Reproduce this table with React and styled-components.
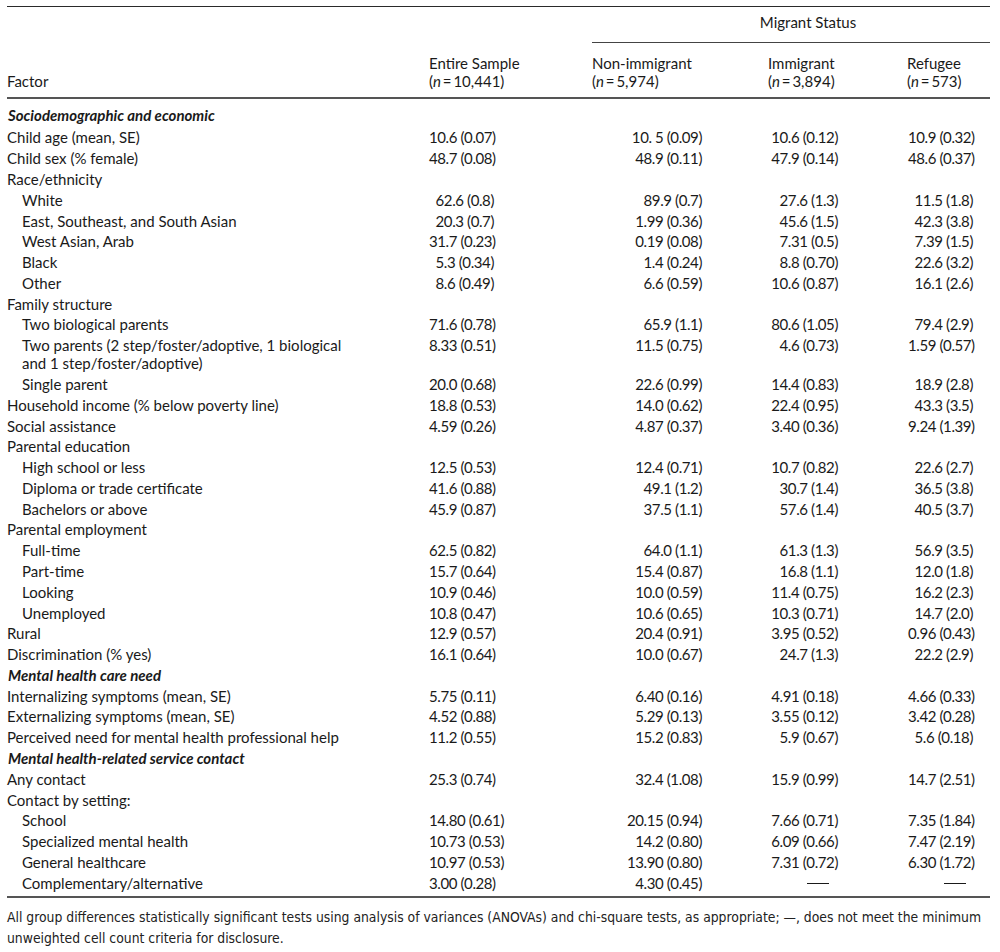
import React from "react";
import styled, { createGlobalStyle } from "styled-components";

const GlobalStyle = createGlobalStyle`
  html, body {
    margin: 0;
    padding: 0;
    background: #ffffff;
  }
  body {
    font-family: Lato, "Open Sans", sans-serif;
    color: #1a1a1a;
  }
`;

// kind: "section" | "row" | "group" | "sub"
const rows = [
  { kind: "section", label: "Sociodemographic and economic" },
  { kind: "row", label: "Child age (mean, SE)", v: ["10.6 (0.07)", "10. 5 (0.09)", "10.6 (0.12)", "10.9 (0.32)"] },
  { kind: "row", label: "Child sex (% female)", v: ["48.7 (0.08)", "48.9 (0.11)", "47.9 (0.14)", "48.6 (0.37)"] },
  { kind: "group", label: "Race/ethnicity" },
  { kind: "sub", label: "White", v: ["62.6 (0.8)", "89.9 (0.7)", "27.6 (1.3)", "11.5 (1.8)"] },
  { kind: "sub", label: "East, Southeast, and South Asian", v: ["20.3 (0.7)", "1.99 (0.36)", "45.6 (1.5)", "42.3 (3.8)"] },
  { kind: "sub", label: "West Asian, Arab", v: ["31.7 (0.23)", "0.19 (0.08)", "7.31 (0.5)", "7.39 (1.5)"] },
  { kind: "sub", label: "Black", v: ["5.3 (0.34)", "1.4 (0.24)", "8.8 (0.70)", "22.6 (3.2)"] },
  { kind: "sub", label: "Other", v: ["8.6 (0.49)", "6.6 (0.59)", "10.6 (0.87)", "16.1 (2.6)"] },
  { kind: "group", label: "Family structure" },
  { kind: "sub", label: "Two biological parents", v: ["71.6 (0.78)", "65.9 (1.1)", "80.6 (1.05)", "79.4 (2.9)"] },
  {
    kind: "sub",
    label: ["Two parents (2 step/foster/adoptive, 1 biological", "and 1 step/foster/adoptive)"],
    v: ["8.33 (0.51)", "11.5 (0.75)", "4.6 (0.73)", "1.59 (0.57)"],
  },
  { kind: "sub", label: "Single parent", v: ["20.0 (0.68)", "22.6 (0.99)", "14.4 (0.83)", "18.9 (2.8)"] },
  { kind: "row", label: "Household income (% below poverty line)", v: ["18.8 (0.53)", "14.0 (0.62)", "22.4 (0.95)", "43.3 (3.5)"] },
  { kind: "row", label: "Social assistance", v: ["4.59 (0.26)", "4.87 (0.37)", "3.40 (0.36)", "9.24 (1.39)"] },
  { kind: "group", label: "Parental education" },
  { kind: "sub", label: "High school or less", v: ["12.5 (0.53)", "12.4 (0.71)", "10.7 (0.82)", "22.6 (2.7)"] },
  { kind: "sub", label: "Diploma or trade certificate", v: ["41.6 (0.88)", "49.1 (1.2)", "30.7 (1.4)", "36.5 (3.8)"] },
  { kind: "sub", label: "Bachelors or above", v: ["45.9 (0.87)", "37.5 (1.1)", "57.6 (1.4)", "40.5 (3.7)"] },
  { kind: "group", label: "Parental employment" },
  { kind: "sub", label: "Full-time", v: ["62.5 (0.82)", "64.0 (1.1)", "61.3 (1.3)", "56.9 (3.5)"] },
  { kind: "sub", label: "Part-time", v: ["15.7 (0.64)", "15.4 (0.87)", "16.8 (1.1)", "12.0 (1.8)"] },
  { kind: "sub", label: "Looking", v: ["10.9 (0.46)", "10.0 (0.59)", "11.4 (0.75)", "16.2 (2.3)"] },
  { kind: "sub", label: "Unemployed", v: ["10.8 (0.47)", "10.6 (0.65)", "10.3 (0.71)", "14.7 (2.0)"] },
  { kind: "row", label: "Rural", v: ["12.9 (0.57)", "20.4 (0.91)", "3.95 (0.52)", "0.96 (0.43)"] },
  { kind: "row", label: "Discrimination (% yes)", v: ["16.1 (0.64)", "10.0 (0.67)", "24.7 (1.3)", "22.2 (2.9)"] },
  { kind: "section", label: "Mental health care need" },
  { kind: "row", label: "Internalizing symptoms (mean, SE)", v: ["5.75 (0.11)", "6.40 (0.16)", "4.91 (0.18)", "4.66 (0.33)"] },
  { kind: "row", label: "Externalizing symptoms (mean, SE)", v: ["4.52 (0.88)", "5.29 (0.13)", "3.55 (0.12)", "3.42 (0.28)"] },
  { kind: "row", label: "Perceived need for mental health professional help", v: ["11.2 (0.55)", "15.2 (0.83)", "5.9 (0.67)", "5.6 (0.18)"] },
  { kind: "section", label: "Mental health-related service contact" },
  { kind: "row", label: "Any contact", v: ["25.3 (0.74)", "32.4 (1.08)", "15.9 (0.99)", "14.7 (2.51)"] },
  { kind: "group", label: "Contact by setting:" },
  { kind: "sub", label: "School", v: ["14.80 (0.61)", "20.15 (0.94)", "7.66 (0.71)", "7.35 (1.84)"] },
  { kind: "sub", label: "Specialized mental health", v: ["10.73 (0.53)", "14.2 (0.80)", "6.09 (0.66)", "7.47 (2.19)"] },
  { kind: "sub", label: "General healthcare", v: ["10.97 (0.53)", "13.90 (0.80)", "7.31 (0.72)", "6.30 (1.72)"] },
  { kind: "sub", label: "Complementary/alternative", v: ["3.00 (0.28)", "4.30 (0.45)", "—", "—"] },
];

// right padding of each value column, and of the dash that marks suppressed cells
const valuePad = [98, 66, 69, 17];
const dashPad = [98, 66, 78, 24];

const columns = [
  { title: "Entire Sample", n: "10,441" },
  { title: "Non-immigrant", n: "5,974" },
  { title: "Immigrant", n: "3,894" },
  { title: "Refugee", n: "573" },
];

export default function App() {
  return (
    <Page>
      <GlobalStyle />
      <Table>
        <colgroup>
          <col style={{ width: 421 }} />
          <col style={{ width: 164 }} />
          <col style={{ width: 176 }} />
          <col style={{ width: 139 }} />
          <col style={{ width: 83 }} />
        </colgroup>
        <thead>
          <TopRow>
            <th />
            <th />
            <SpanHead colSpan={3}>
              <SpanLabel>Migrant Status</SpanLabel>
            </SpanHead>
          </TopRow>
          <HeadRow>
            <HeadCell>Factor</HeadCell>
            {columns.map((c, i) => (
              <HeadCell key={c.title} $pad={i === 0 ? 1 : 0}>
                {c.title}
                <br />(<Italic>n</Italic>{"\u2009=\u2009"}{c.n})
              </HeadCell>
            ))}
          </HeadRow>
        </thead>
        <tbody>
          {rows.map((r, idx) => {
            const first = idx === 0;
            const last = idx === rows.length - 1;
            if (r.kind === "section") {
              return (
                <BodyRow key={idx} $first={first}>
                  <SectionCell colSpan={5}>{r.label}</SectionCell>
                </BodyRow>
              );
            }
            return (
              <BodyRow key={idx} $last={last}>
                <LabelCell $indent={r.kind === "sub"}>
                  {Array.isArray(r.label)
                    ? r.label.map((l, j) => (
                        <React.Fragment key={j}>
                          {j > 0 && <br />}
                          {l}
                        </React.Fragment>
                      ))
                    : r.label}
                </LabelCell>
                {(r.v || ["", "", "", ""]).map((val, j) =>
                  val === "—" ? (
                    <ValueCell key={j} $pad={dashPad[j]}>
                      <Dash />
                    </ValueCell>
                  ) : (
                    <ValueCell key={j} $pad={valuePad[j]}>
                      {val}
                    </ValueCell>
                  )
                )}
              </BodyRow>
            );
          })}
        </tbody>
      </Table>
      <Footnote>
        All group differences statistically significant tests using analysis of variances (ANOVAs) and
        chi-square tests, as appropriate; —, does not meet the minimum unweighted cell count criteria for
        disclosure.
      </Footnote>
    </Page>
  );
}

const Page = styled.div`
  width: 983px;
  padding: 6px 10px 0 7px;
  font-size: 15px;
`;

const Table = styled.table`
  width: 983px;
  border-collapse: collapse;
  table-layout: fixed;
  border-top: 1px solid #2a2a2a;
  border-bottom: 2px solid #555555;
  line-height: 18px;

  th {
    font-weight: normal;
    text-align: left;
    padding: 0;
  }
`;

const TopRow = styled.tr`
  height: 35px;
`;

const SpanHead = styled.th`
  && {
    padding: 6px 0 0 0;
    vertical-align: top;
  }
`;

const SpanLabel = styled.div`
  text-align: center;
  padding: 0 0 11px 34px;
  border-bottom: 1px solid #444444;
`;

const HeadRow = styled.tr`
  border-bottom: 2px solid #555555;
`;

const HeadCell = styled.th`
  && {
    vertical-align: bottom;
    padding: 11px 0 7px ${(p) => p.$pad || 0}px;
  }
`;

const Italic = styled.i`
  font-style: italic;
`;

const BodyRow = styled.tr`
  td {
    padding-top: ${(p) => (p.$first ? 7 : 1.4)}px;
    padding-bottom: ${(p) => (p.$first ? 3 : p.$last ? 4 : 1.4)}px;
  }
`;

const SectionCell = styled.td`
  font-weight: 700;
  font-style: italic;
`;

const LabelCell = styled.td`
  padding-left: ${(p) => (p.$indent ? 15 : 0)}px;
  white-space: nowrap;
`;

const ValueCell = styled.td`
  text-align: right;
  vertical-align: top;
  padding-right: ${(p) => p.$pad}px;
  white-space: nowrap;
  letter-spacing: -0.4px;
`;

const Dash = styled.span`
  display: inline-block;
  width: 22px;
  height: 1.5px;
  background: #1a1a1a;
  vertical-align: middle;
  margin-bottom: 3px;
`;

const Footnote = styled.p`
  margin: 9px 0 0;
  font-family: "Liberation Sans Narrow", "DejaVu Sans Condensed", sans-serif;
  font-size: 13.8px;
  line-height: 21px;
  color: #222222;
`;
